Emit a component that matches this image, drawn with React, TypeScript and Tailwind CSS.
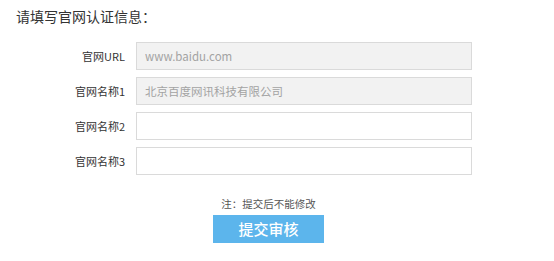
import React from "react"

const rows = [
  { label: "官网URL", value: "www.baidu.com", disabled: true },
  { label: "官网名称1", value: "北京百度网讯科技有限公司", disabled: true },
  { label: "官网名称2", value: "", disabled: false },
  { label: "官网名称3", value: "", disabled: false },
]

export default function App() {
  return (
    <div
      className="w-[554px] h-[261px] bg-white text-[#333]"
      style={{ fontFamily: '"Microsoft YaHei", "Noto Sans CJK SC", "Noto Sans", sans-serif' }}
    >
      <h1 className="pl-[16px] pt-[6px] text-[14px] leading-[20px] font-normal text-[#333]">
        请填写官网认证信息：
      </h1>

      <form className="mt-[16px] flex flex-col gap-[7px]" onSubmit={e => e.preventDefault()}>
        {rows.map(row => (
          <div key={row.label} className="flex items-center">
            <label className="w-[125px] text-right text-[11px] leading-[16px] text-[#333]">
              {row.label}
            </label>
            <input
              type="text"
              readOnly
              defaultValue={row.value}
              className={
                "ml-[11px] w-[336px] h-[28px] px-[8px] text-[11.5px] text-[#a3a3a3] border border-[#dadada] outline-none " +
                (row.disabled ? "bg-[#f2f2f2]" : "bg-white")
              }
            />
          </div>
        ))}

        <div className="ml-[213px] w-[111px] mt-[14px] flex flex-col items-center">
          <p className="text-[10.5px] leading-[16px] text-[#555]">注：提交后不能修改</p>
          <button
            type="submit"
            className="mt-[3px] w-[111px] h-[28px] bg-[#5cb5ec] text-white text-[15px] leading-[28px] font-medium"
          >
            提交审核
          </button>
        </div>
      </form>
    </div>
  )
}
